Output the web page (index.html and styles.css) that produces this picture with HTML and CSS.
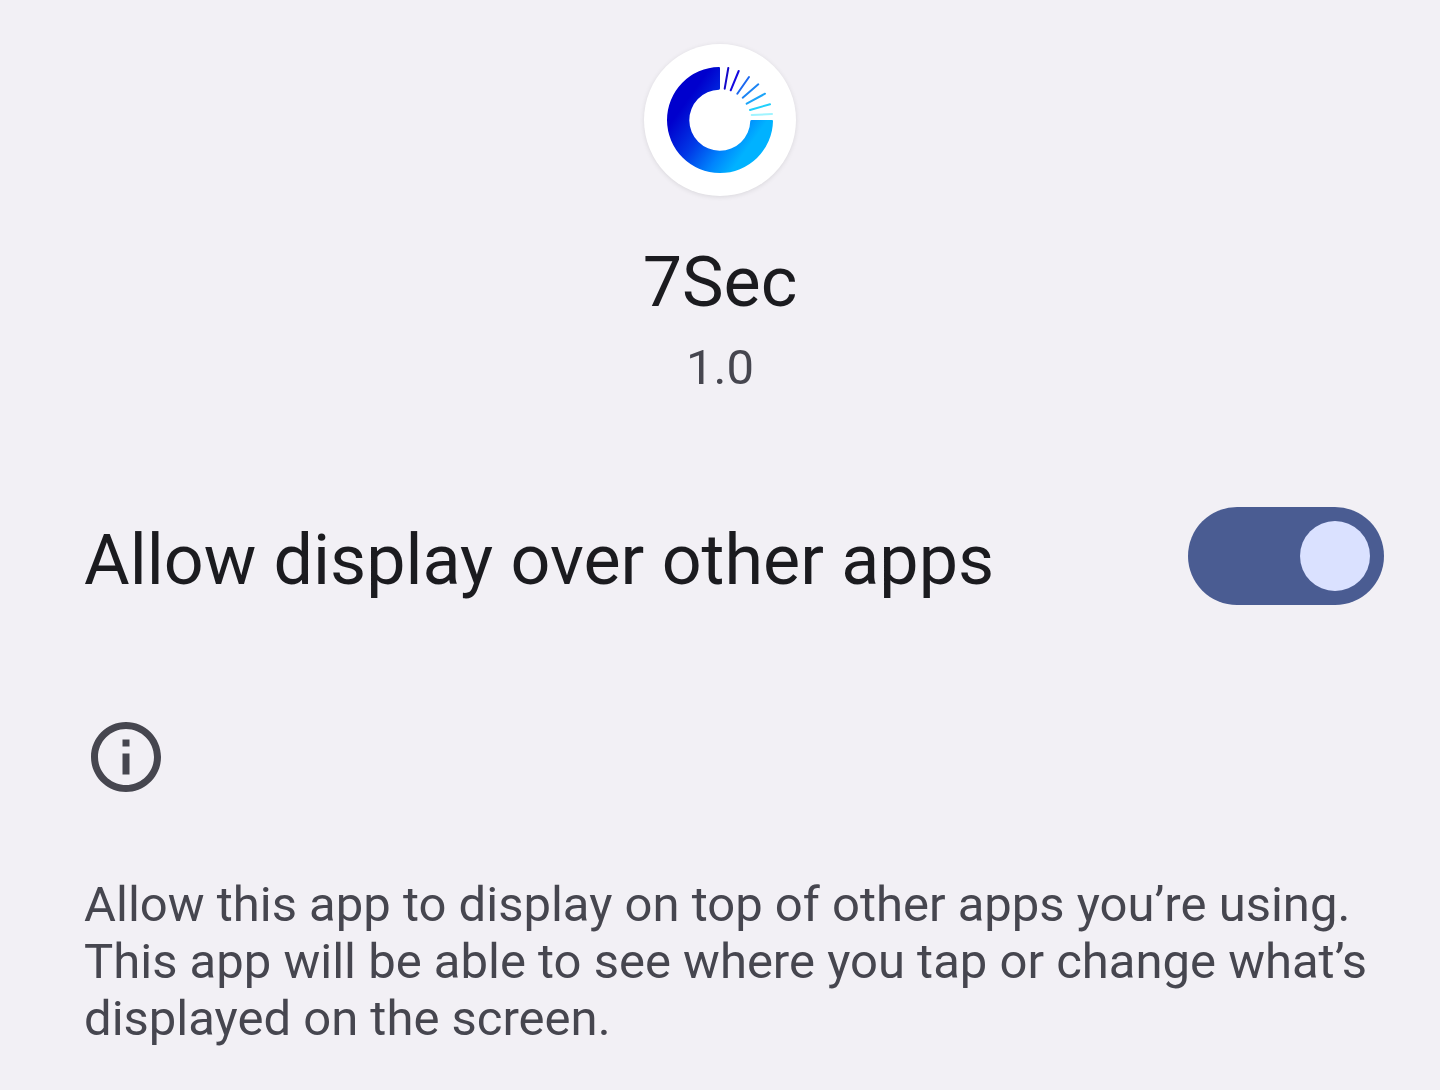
FILE: index.html
```html
<!DOCTYPE html>
<html lang="en">
<head>
<meta charset="utf-8">
<meta name="viewport" content="width=device-width, initial-scale=1">
<title>Display over other apps</title>
<link rel="stylesheet" href="styles.css">
</head>
<body>
<main class="page">
  <header class="app">
    <div class="app-icon">
      <svg class="logo" viewBox="0 0 106 106" aria-hidden="true">
        <defs>
          <linearGradient id="ring" gradientUnits="userSpaceOnUse" x1="28" y1="22" x2="91" y2="67">
            <stop offset="0" stop-color="#0000cd"/>
            <stop offset="0.4" stop-color="#0038e6"/>
            <stop offset="0.75" stop-color="#0084fd"/>
            <stop offset="1" stop-color="#00b2ff"/>
          </linearGradient>
        </defs>
        <path fill="url(#ring)" d="M52 0Q53 0 53 1V21.500Q53 22.500 52 22.700A30.500 30.500 0 1 0 83.300 54Q83.500 53 84.500 53H105Q106 53 106 54A53 53 0 1 1 52 0Z"/>
        <g stroke-width="2" stroke-linecap="round">
          <path stroke="#1408c8" d="M57.700 21.700L61.300 1"/>
          <path stroke="#1408e0" d="M63.700 23.300L71.700 4"/>
          <path stroke="#1c68f0" d="M70.300 26.700L82 10"/>
          <path stroke="#1c84f4" d="M75.700 30.700L91.300 17.300"/>
          <path stroke="#1ca4f8" d="M79.700 36.700L98 26.700"/>
          <path stroke="#20d0fc" d="M83 43L103 37.300"/>
          <path stroke="#a0f4ff" d="M84.700 48L105 47"/>
        </g>
      </svg>
    </div>
    <h1 class="app-name">7Sec</h1>
    <p class="app-version">1.0</p>
  </header>
  <div class="setting">
    <label class="setting-label" for="overlay">Allow display over other apps</label>
    <input class="switch" type="checkbox" role="switch" id="overlay" checked>
  </div>
  <footer class="info">
    <svg class="info-icon" viewBox="0 0 24 24" aria-hidden="true"><path fill="currentColor" d="M11 7h2v2h-2zm0 4h2v6h-2zm1-9C6.480 2 2 6.480 2 12s4.480 10 10 10 10-4.480 10-10S17.520 2 12 2zm0 18c-4.410 0-8-3.590-8-8s3.590-8 8-8 8 3.590 8 8-3.590 8-8 8z"/></svg>
    <p class="info-text">Allow this app to display on top of other apps you’re using. This app will be able to see where you tap or change what’s displayed on the screen.</p>
  </footer>
</main>
</body>
</html>
```

FILE: styles.css
```css
* { box-sizing: border-box; }
body {
  margin: 0;
  background: #f2f0f5;
  color: #1b1b1f;
  font-family: Roboto, sans-serif;
}
h1, p { margin: 0; font-weight: 400; }
.page { padding: 44px 0; }
.app {
  display: flex;
  flex-direction: column;
  align-items: center;
}
.app-icon {
  display: grid;
  place-items: center;
  width: 152px;
  height: 152px;
  border-radius: 50%;
  background: #fff;
  box-shadow: 0 1px 5px rgba(0, 0, 0, 0.1);
}
.logo { width: 106px; height: 106px; }
.app-name { margin-top: 44px; font-size: 70px; line-height: 84px; }
.app-version { margin-top: 15px; font-size: 49px; line-height: 57px; color: #46464f; }
.setting {
  display: flex;
  align-items: center;
  justify-content: space-between;
  margin-top: 111px;
  padding: 0 56px 0 84px;
}
.setting-label { padding-top: 8px; font-size: 70px; line-height: 84px; }
.switch {
  appearance: none;
  flex: none;
  display: flex;
  align-items: center;
  width: 196px;
  height: 98px;
  margin: 0;
  padding: 14px;
  border-radius: 49px;
  background: #4a5c92;
}
.switch::before {
  content: "";
  width: 70px;
  height: 70px;
  border-radius: 50%;
  background: #dae1ff;
}
.switch:checked { justify-content: flex-end; }
.info { margin-top: 110px; padding: 0 56px 0 84px; color: #46464f; }
.info-icon { display: block; width: 84px; height: 84px; }
.info-text { margin-top: 77px; font-size: 49px; line-height: 57px; }
```
